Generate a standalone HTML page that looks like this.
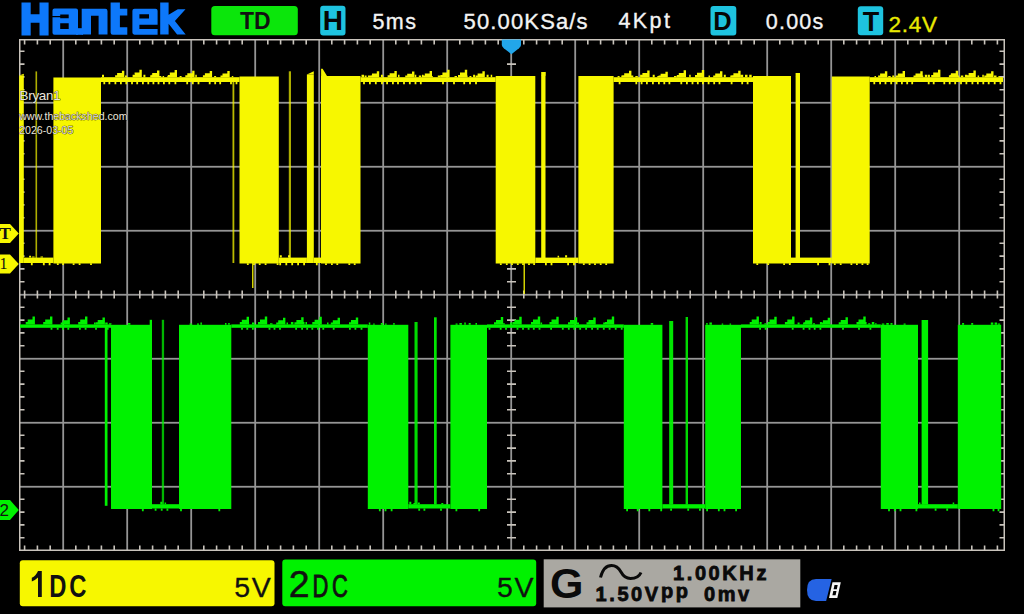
<!DOCTYPE html>
<html><head><meta charset="utf-8"><style>
html,body{margin:0;padding:0;background:#000;}
body{width:1024px;height:614px;overflow:hidden;position:relative;}
svg{position:absolute;left:0;top:0;display:block;}
</style></head><body>
<svg width="1024" height="614" viewBox="0 0 1024 614">
<rect width="1024" height="614" fill="#000"/>
<rect x="62.30" y="40" width="1.8" height="510" fill="#959595"/><rect x="126.30" y="40" width="1.8" height="510" fill="#959595"/><rect x="190.30" y="40" width="1.8" height="510" fill="#959595"/><rect x="254.30" y="40" width="1.8" height="510" fill="#959595"/><rect x="318.30" y="40" width="1.8" height="510" fill="#959595"/><rect x="382.30" y="40" width="1.8" height="510" fill="#959595"/><rect x="446.30" y="40" width="1.8" height="510" fill="#959595"/><rect x="510.30" y="40" width="1.8" height="510" fill="#959595"/><rect x="574.30" y="40" width="1.8" height="510" fill="#959595"/><rect x="638.30" y="40" width="1.8" height="510" fill="#959595"/><rect x="702.30" y="40" width="1.8" height="510" fill="#959595"/><rect x="766.30" y="40" width="1.8" height="510" fill="#959595"/><rect x="830.30" y="40" width="1.8" height="510" fill="#959595"/><rect x="894.30" y="40" width="1.8" height="510" fill="#959595"/><rect x="958.30" y="40" width="1.8" height="510" fill="#959595"/><rect x="20" y="101.85" width="984" height="1.8" fill="#959595"/><rect x="20" y="165.85" width="984" height="1.8" fill="#959595"/><rect x="20" y="229.85" width="984" height="1.8" fill="#959595"/><rect x="20" y="293.85" width="984" height="1.8" fill="#959595"/><rect x="20" y="357.85" width="984" height="1.8" fill="#959595"/><rect x="20" y="421.85" width="984" height="1.8" fill="#959595"/><rect x="20" y="485.85" width="984" height="1.8" fill="#959595"/><rect x="19.75" y="39.75" width="984.5" height="510.5" fill="none" stroke="#c9c4bc" stroke-width="1.5"/><path d="M24.6 40v4.5M24.6 550v-4.5M24.6 290.5v8M37.4 40v4.5M37.4 550v-4.5M37.4 290.5v8M50.2 40v4.5M50.2 550v-4.5M50.2 290.5v8M75.8 40v4.5M75.8 550v-4.5M75.8 290.5v8M88.6 40v4.5M88.6 550v-4.5M88.6 290.5v8M101.4 40v4.5M101.4 550v-4.5M101.4 290.5v8M114.2 40v4.5M114.2 550v-4.5M114.2 290.5v8M139.8 40v4.5M139.8 550v-4.5M139.8 290.5v8M152.6 40v4.5M152.6 550v-4.5M152.6 290.5v8M165.4 40v4.5M165.4 550v-4.5M165.4 290.5v8M178.2 40v4.5M178.2 550v-4.5M178.2 290.5v8M203.8 40v4.5M203.8 550v-4.5M203.8 290.5v8M216.6 40v4.5M216.6 550v-4.5M216.6 290.5v8M229.4 40v4.5M229.4 550v-4.5M229.4 290.5v8M242.2 40v4.5M242.2 550v-4.5M242.2 290.5v8M267.8 40v4.5M267.8 550v-4.5M267.8 290.5v8M280.6 40v4.5M280.6 550v-4.5M280.6 290.5v8M293.4 40v4.5M293.4 550v-4.5M293.4 290.5v8M306.2 40v4.5M306.2 550v-4.5M306.2 290.5v8M331.8 40v4.5M331.8 550v-4.5M331.8 290.5v8M344.6 40v4.5M344.6 550v-4.5M344.6 290.5v8M357.4 40v4.5M357.4 550v-4.5M357.4 290.5v8M370.2 40v4.5M370.2 550v-4.5M370.2 290.5v8M395.8 40v4.5M395.8 550v-4.5M395.8 290.5v8M408.6 40v4.5M408.6 550v-4.5M408.6 290.5v8M421.4 40v4.5M421.4 550v-4.5M421.4 290.5v8M434.2 40v4.5M434.2 550v-4.5M434.2 290.5v8M459.8 40v4.5M459.8 550v-4.5M459.8 290.5v8M472.6 40v4.5M472.6 550v-4.5M472.6 290.5v8M485.4 40v4.5M485.4 550v-4.5M485.4 290.5v8M498.2 40v4.5M498.2 550v-4.5M498.2 290.5v8M523.8 40v4.5M523.8 550v-4.5M523.8 290.5v8M536.6 40v4.5M536.6 550v-4.5M536.6 290.5v8M549.4 40v4.5M549.4 550v-4.5M549.4 290.5v8M562.2 40v4.5M562.2 550v-4.5M562.2 290.5v8M587.8 40v4.5M587.8 550v-4.5M587.8 290.5v8M600.6 40v4.5M600.6 550v-4.5M600.6 290.5v8M613.4 40v4.5M613.4 550v-4.5M613.4 290.5v8M626.2 40v4.5M626.2 550v-4.5M626.2 290.5v8M651.8 40v4.5M651.8 550v-4.5M651.8 290.5v8M664.6 40v4.5M664.6 550v-4.5M664.6 290.5v8M677.4 40v4.5M677.4 550v-4.5M677.4 290.5v8M690.2 40v4.5M690.2 550v-4.5M690.2 290.5v8M715.8 40v4.5M715.8 550v-4.5M715.8 290.5v8M728.6 40v4.5M728.6 550v-4.5M728.6 290.5v8M741.4 40v4.5M741.4 550v-4.5M741.4 290.5v8M754.2 40v4.5M754.2 550v-4.5M754.2 290.5v8M779.8 40v4.5M779.8 550v-4.5M779.8 290.5v8M792.6 40v4.5M792.6 550v-4.5M792.6 290.5v8M805.4 40v4.5M805.4 550v-4.5M805.4 290.5v8M818.2 40v4.5M818.2 550v-4.5M818.2 290.5v8M843.8 40v4.5M843.8 550v-4.5M843.8 290.5v8M856.6 40v4.5M856.6 550v-4.5M856.6 290.5v8M869.4 40v4.5M869.4 550v-4.5M869.4 290.5v8M882.2 40v4.5M882.2 550v-4.5M882.2 290.5v8M907.8 40v4.5M907.8 550v-4.5M907.8 290.5v8M920.6 40v4.5M920.6 550v-4.5M920.6 290.5v8M933.4 40v4.5M933.4 550v-4.5M933.4 290.5v8M946.2 40v4.5M946.2 550v-4.5M946.2 290.5v8M971.8 40v4.5M971.8 550v-4.5M971.8 290.5v8M984.6 40v4.5M984.6 550v-4.5M984.6 290.5v8M997.4 40v4.5M997.4 550v-4.5M997.4 290.5v8M20 51.3h4.5M1004 51.3h-4.5M20 64.1h4.5M1004 64.1h-4.5M507 64.1h9M20 76.9h4.5M1004 76.9h-4.5M507 76.9h9M20 89.7h4.5M1004 89.7h-4.5M507 89.7h9M20 115.3h4.5M1004 115.3h-4.5M507 115.3h9M20 128.1h4.5M1004 128.1h-4.5M507 128.1h9M20 140.9h4.5M1004 140.9h-4.5M507 140.9h9M20 153.7h4.5M1004 153.7h-4.5M507 153.7h9M20 179.3h4.5M1004 179.3h-4.5M507 179.3h9M20 192.1h4.5M1004 192.1h-4.5M507 192.1h9M20 204.9h4.5M1004 204.9h-4.5M507 204.9h9M20 217.7h4.5M1004 217.7h-4.5M507 217.7h9M20 243.3h4.5M1004 243.3h-4.5M507 243.3h9M20 256.1h4.5M1004 256.1h-4.5M507 256.1h9M20 268.9h4.5M1004 268.9h-4.5M507 268.9h9M20 281.7h4.5M1004 281.7h-4.5M507 281.7h9M20 307.3h4.5M1004 307.3h-4.5M507 307.3h9M20 320.1h4.5M1004 320.1h-4.5M507 320.1h9M20 332.9h4.5M1004 332.9h-4.5M507 332.9h9M20 345.7h4.5M1004 345.7h-4.5M507 345.7h9M20 371.3h4.5M1004 371.3h-4.5M507 371.3h9M20 384.1h4.5M1004 384.1h-4.5M507 384.1h9M20 396.9h4.5M1004 396.9h-4.5M507 396.9h9M20 409.7h4.5M1004 409.7h-4.5M507 409.7h9M20 435.3h4.5M1004 435.3h-4.5M507 435.3h9M20 448.1h4.5M1004 448.1h-4.5M507 448.1h9M20 460.9h4.5M1004 460.9h-4.5M507 460.9h9M20 473.7h4.5M1004 473.7h-4.5M507 473.7h9M20 499.3h4.5M1004 499.3h-4.5M507 499.3h9M20 512.1h4.5M1004 512.1h-4.5M507 512.1h9M20 524.9h4.5M1004 524.9h-4.5M507 524.9h9M20 537.7h4.5M1004 537.7h-4.5M507 537.7h9" stroke="#c9c4bc" stroke-width="1.6" fill="none"/>
<rect x="101.00" y="77.20" width="138.50" height="4.80" fill="#F7F700"/><rect x="360.50" y="77.20" width="135.20" height="4.80" fill="#F7F700"/><rect x="613.60" y="77.20" width="139.40" height="4.80" fill="#F7F700"/><rect x="869.70" y="77.20" width="133.30" height="4.80" fill="#F7F700"/><rect x="23.80" y="257.60" width="29.60" height="5.40" fill="#F7F700"/><rect x="278.80" y="257.60" width="28.10" height="5.40" fill="#F7F700"/><rect x="313.80" y="257.60" width="7.20" height="5.40" fill="#F7F700"/><rect x="535.30" y="257.60" width="43.10" height="5.40" fill="#F7F700"/><rect x="791.00" y="257.60" width="40.80" height="5.40" fill="#F7F700"/><rect x="19.20" y="75.60" width="4.60" height="187.40" fill="#F7F700"/><rect x="53.40" y="77.50" width="47.60" height="186.00" fill="#F7F700"/><rect x="239.50" y="76.50" width="39.30" height="187.00" fill="#F7F700"/><rect x="306.90" y="74.50" width="6.90" height="188.50" fill="#F7F700"/><rect x="321.00" y="76.00" width="39.50" height="187.50" fill="#F7F700"/><rect x="495.70" y="76.00" width="39.60" height="187.50" fill="#F7F700"/><rect x="578.40" y="76.00" width="35.20" height="187.50" fill="#F7F700"/><rect x="753.00" y="76.00" width="38.00" height="187.50" fill="#F7F700"/><rect x="831.80" y="76.50" width="37.90" height="187.00" fill="#F7F700"/><rect x="35.50" y="71.40" width="1.60" height="190.60" fill="#F7F700" opacity="0.7"/><rect x="232.50" y="80.00" width="1.80" height="183.00" fill="#F7F700" opacity="0.75"/><rect x="288.80" y="71.30" width="2.20" height="190.70" fill="#F7F700" opacity="0.7"/><rect x="541.20" y="72.00" width="4.30" height="190.00" fill="#F7F700"/><rect x="795.60" y="73.00" width="4.40" height="189.00" fill="#F7F700"/><rect x="252.00" y="262.00" width="1.50" height="26.00" fill="#F7F700" opacity="0.85"/><rect x="523.50" y="262.00" width="1.50" height="32.00" fill="#F7F700" opacity="0.85"/><path d="M102.0 77.2v-2.4h2v2.4zM116.6 77.2v-1.2h1.5v1.2zM125.0 77.2v-1.8h2v1.8zM132.6 77.2v-2.4h1.5v2.4zM135.7 77.2v-1.2h2.5v1.2zM138.8 77.2v-1.8h2.5v1.8zM143.4 77.2v-2.4h2v2.4zM151.4 77.2v-2.4h1.5v2.4zM155.8 77.2v-1.2h2.5v1.2zM159.3 77.2v-1.2h2v1.2zM162.6 77.2v-1.2h1.5v1.2zM167.3 77.2v-1.2h1.5v1.2zM175.0 77.2v-2.4h1.5v2.4zM179.6 77.2v-1.2h2v1.2zM187.7 77.2v-1.2h2.5v1.2zM190.9 77.2v-1.8h1.5v1.8zM195.3 77.2v-2.4h1.5v2.4zM204.1 77.2v-1.8h2v1.8zM209.1 77.2v-2.4h2v2.4zM214.1 77.2v-1.2h2v1.2zM223.2 77.2v-1.2h1.5v1.2zM227.1 77.2v-2.4h2v2.4zM231.8 77.2v-1.2h1.5v1.2zM103.4 82.0v2.2h1.8v-2.2zM108.5 82.0v2.2h1.8v-2.2zM114.5 82.0v2.2h1.8v-2.2zM120.0 82.0v2.2h1.8v-2.2zM125.4 82.0v2.2h1.8v-2.2zM131.1 82.0v2.2h1.8v-2.2zM136.3 82.0v2.2h1.8v-2.2zM142.0 82.0v2.2h1.8v-2.2zM147.4 82.0v2.2h1.8v-2.2zM152.5 82.0v2.2h1.8v-2.2zM157.6 82.0v2.2h1.8v-2.2zM163.0 82.0v2.2h1.8v-2.2zM168.4 82.0v2.2h1.8v-2.2zM174.5 82.0v2.2h1.8v-2.2zM186.3 82.0v2.2h1.8v-2.2zM191.9 82.0v2.2h1.8v-2.2zM197.6 82.0v2.2h1.8v-2.2zM208.8 82.0v2.2h1.8v-2.2zM214.3 82.0v2.2h1.8v-2.2zM219.3 82.0v2.2h1.8v-2.2zM230.1 82.0v2.2h1.8v-2.2zM235.6 82.0v2.2h1.8v-2.2zM115.1 77.2V75.2H117.1V73.1H121.9V70.7H124.3V77.2zM132.6 77.2V75.0H134.6V72.6H139.4V69.8H141.8V77.2zM150.2 77.2V75.2H152.2V73.1H157.0V70.5H159.4V77.2zM167.8 77.2V75.0H169.8V72.6H174.6V69.9H177.0V77.2zM185.3 77.2V75.3H187.3V73.2H192.2V70.8H194.5V77.2zM202.9 77.2V75.3H204.9V73.3H209.7V71.0H212.1V77.2zM220.5 77.2V75.4H222.5V73.4H227.3V71.1H229.7V77.2zM361.5 77.2v-2.4h2.5v2.4zM364.6 77.2v-1.8h2v1.8zM367.9 77.2v-1.8h2.5v1.8zM371.7 77.2v-2.4h2.5v2.4zM380.9 77.2v-2.4h2v2.4zM394.3 77.2v-2.4h2.5v2.4zM398.0 77.2v-2.4h1.5v2.4zM410.6 77.2v-2.4h2.5v2.4zM414.8 77.2v-2.4h1.5v2.4zM418.8 77.2v-1.8h2.5v1.8zM422.0 77.2v-2.4h1.5v2.4zM430.8 77.2v-1.2h2v1.2zM437.8 77.2v-1.8h2.5v1.8zM442.7 77.2v-1.2h2v1.2zM446.5 77.2v-2.4h2v2.4zM454.5 77.2v-1.2h2.5v1.2zM459.4 77.2v-1.2h2v1.2zM466.1 77.2v-1.8h1.5v1.8zM469.4 77.2v-1.2h2v1.2zM473.1 77.2v-2.4h2v2.4zM481.8 77.2v-1.2h2v1.2zM486.6 77.2v-2.4h2v2.4zM490.7 77.2v-2.4h1.5v2.4zM363.1 82.0v2.2h1.8v-2.2zM369.0 82.0v2.2h1.8v-2.2zM374.9 82.0v2.2h1.8v-2.2zM381.1 82.0v2.2h1.8v-2.2zM386.2 82.0v2.2h1.8v-2.2zM392.0 82.0v2.2h1.8v-2.2zM397.1 82.0v2.2h1.8v-2.2zM403.1 82.0v2.2h1.8v-2.2zM408.9 82.0v2.2h1.8v-2.2zM414.6 82.0v2.2h1.8v-2.2zM419.9 82.0v2.2h1.8v-2.2zM442.1 82.0v2.2h1.8v-2.2zM453.1 82.0v2.2h1.8v-2.2zM463.3 82.0v2.2h1.8v-2.2zM469.1 82.0v2.2h1.8v-2.2zM475.1 82.0v2.2h1.8v-2.2zM370.0 77.2V75.4H372.0V73.5H376.8V71.2H379.2V77.2zM387.6 77.2V75.3H389.6V73.3H394.4V70.9H396.8V77.2zM405.2 77.2V75.5H407.2V73.7H412.0V71.5H414.4V77.2zM422.8 77.2V75.4H424.8V73.4H429.6V71.1H432.0V77.2zM440.4 77.2V75.0H442.4V72.6H447.2V69.7H449.6V77.2zM458.0 77.2V75.0H460.0V72.6H464.8V69.8H467.2V77.2zM475.6 77.2V75.4H477.6V73.5H482.4V71.2H484.8V77.2zM617.6 77.2v-1.2h2v1.2zM621.3 77.2v-1.8h2v1.8zM626.2 77.2v-1.2h2v1.2zM630.8 77.2v-1.8h2.5v1.8zM635.3 77.2v-1.2h2.5v1.2zM640.1 77.2v-2.4h2.5v2.4zM652.7 77.2v-2.4h2v2.4zM657.3 77.2v-1.2h2.5v1.2zM674.0 77.2v-1.2h2.5v1.2zM678.1 77.2v-1.2h2v1.2zM682.1 77.2v-2.4h2v2.4zM689.2 77.2v-2.4h1.5v2.4zM696.3 77.2v-1.8h2v1.8zM699.9 77.2v-1.2h2v1.2zM708.5 77.2v-1.8h1.5v1.8zM716.8 77.2v-1.2h1.5v1.2zM720.2 77.2v-2.4h2v2.4zM723.8 77.2v-2.4h2v2.4zM730.3 77.2v-1.8h2.5v1.8zM733.7 77.2v-1.8h1.5v1.8zM737.4 77.2v-2.4h2.5v2.4zM740.7 77.2v-2.4h2.5v2.4zM745.0 77.2v-2.4h2.5v2.4zM749.2 77.2v-2.4h2.5v2.4zM618.7 82.0v2.2h1.8v-2.2zM635.4 82.0v2.2h1.8v-2.2zM640.7 82.0v2.2h1.8v-2.2zM646.0 82.0v2.2h1.8v-2.2zM652.0 82.0v2.2h1.8v-2.2zM658.0 82.0v2.2h1.8v-2.2zM663.4 82.0v2.2h1.8v-2.2zM668.5 82.0v2.2h1.8v-2.2zM680.4 82.0v2.2h1.8v-2.2zM686.0 82.0v2.2h1.8v-2.2zM691.6 82.0v2.2h1.8v-2.2zM696.9 82.0v2.2h1.8v-2.2zM702.0 82.0v2.2h1.8v-2.2zM707.7 82.0v2.2h1.8v-2.2zM713.3 82.0v2.2h1.8v-2.2zM718.6 82.0v2.2h1.8v-2.2zM730.7 82.0v2.2h1.8v-2.2zM741.3 82.0v2.2h1.8v-2.2zM746.7 82.0v2.2h1.8v-2.2zM622.2 77.2V75.3H624.2V73.3H629.0V70.8H631.4V77.2zM640.4 77.2V75.2H642.4V73.0H647.2V70.5H649.6V77.2zM658.6 77.2V75.5H660.6V73.8H665.4V71.7H667.8V77.2zM676.8 77.2V75.1H678.8V72.9H683.6V70.3H686.0V77.2zM695.0 77.2V75.0H697.0V72.7H701.8V70.0H704.2V77.2zM713.2 77.2V75.4H715.2V73.6H720.0V71.3H722.4V77.2zM731.4 77.2V75.3H733.4V73.2H738.2V70.8H740.6V77.2zM874.5 77.2v-1.2h1.5v1.2zM878.5 77.2v-1.2h2.5v1.2zM888.2 77.2v-1.2h2.5v1.2zM892.3 77.2v-1.8h2v1.8zM921.8 77.2v-1.8h1.5v1.8zM924.8 77.2v-2.4h2.5v2.4zM927.9 77.2v-2.4h2v2.4zM935.7 77.2v-1.8h2.5v1.8zM950.1 77.2v-2.4h1.5v2.4zM954.5 77.2v-1.8h2.5v1.8zM957.6 77.2v-1.8h1.5v1.8zM960.8 77.2v-1.8h2.5v1.8zM964.9 77.2v-2.4h2.5v2.4zM969.6 77.2v-1.8h2.5v1.8zM972.8 77.2v-1.2h2v1.2zM977.6 77.2v-1.8h1.5v1.8zM982.3 77.2v-2.4h1.5v2.4zM986.2 77.2v-1.8h2.5v1.8zM990.0 77.2v-2.4h2v2.4zM994.0 77.2v-1.8h2.5v1.8zM998.4 77.2v-1.2h1.5v1.2zM873.4 82.0v2.2h1.8v-2.2zM879.2 82.0v2.2h1.8v-2.2zM884.6 82.0v2.2h1.8v-2.2zM890.3 82.0v2.2h1.8v-2.2zM895.7 82.0v2.2h1.8v-2.2zM901.0 82.0v2.2h1.8v-2.2zM906.3 82.0v2.2h1.8v-2.2zM911.3 82.0v2.2h1.8v-2.2zM927.8 82.0v2.2h1.8v-2.2zM932.8 82.0v2.2h1.8v-2.2zM943.4 82.0v2.2h1.8v-2.2zM948.8 82.0v2.2h1.8v-2.2zM954.3 82.0v2.2h1.8v-2.2zM960.1 82.0v2.2h1.8v-2.2zM965.5 82.0v2.2h1.8v-2.2zM971.5 82.0v2.2h1.8v-2.2zM976.9 82.0v2.2h1.8v-2.2zM982.4 82.0v2.2h1.8v-2.2zM987.8 82.0v2.2h1.8v-2.2zM993.8 82.0v2.2h1.8v-2.2zM999.6 82.0v2.2h1.8v-2.2zM878.1 77.2V75.4H880.1V73.6H884.9V71.3H887.3V77.2zM895.8 77.2V75.4H897.8V73.4H902.6V71.1H905.0V77.2zM913.5 77.2V75.4H915.5V73.5H920.3V71.2H922.7V77.2zM931.2 77.2V75.0H933.2V72.6H938.0V69.8H940.4V77.2zM948.9 77.2V75.2H950.9V73.2H955.7V70.7H958.1V77.2zM966.6 77.2V75.2H968.6V73.0H973.4V70.4H975.8V77.2zM984.3 77.2V75.4H986.3V73.5H991.1V71.3H993.5V77.2z" fill="#F7F700"/><path d="M29.1 257.6v-1.8h2v1.8zM32.1 257.6v-1.2h2.5v1.2zM40.5 257.6v-1.2h2.5v1.2zM30.9 263.0v2.2h1.8v-2.2zM42.9 263.0v2.2h1.8v-2.2zM48.7 263.0v2.2h1.8v-2.2zM279.8 257.6v-2.4h2v2.4zM288.0 257.6v-2.4h2v2.4zM279.3 263.0v2.2h1.8v-2.2zM285.4 263.0v2.2h1.8v-2.2zM291.3 263.0v2.2h1.8v-2.2zM297.2 263.0v2.2h1.8v-2.2zM303.2 263.0v2.2h1.8v-2.2zM315.9 263.0v2.2h1.8v-2.2zM557.6 257.6v-1.8h1.5v1.8zM565.1 257.6v-2.4h2v2.4zM545.0 263.0v2.2h1.8v-2.2zM550.6 263.0v2.2h1.8v-2.2zM567.2 263.0v2.2h1.8v-2.2zM573.1 263.0v2.2h1.8v-2.2zM796.8 257.6v-2.4h2.5v2.4zM817.2 263.0v2.2h1.8v-2.2zM828.6 263.0v2.2h1.8v-2.2z" fill="#F7F700"/><path d="M56.9 263.3v1.8h1.8v-1.8zM62.2 263.3v1.8h1.8v-1.8zM72.7 263.3v1.8h1.8v-1.8zM78.7 263.3v1.8h1.8v-1.8zM90.1 263.3v1.8h1.8v-1.8zM246.9 263.3v1.8h1.8v-1.8zM253.1 263.3v1.8h1.8v-1.8zM258.8 263.3v1.8h1.8v-1.8zM264.7 263.3v1.8h1.8v-1.8zM276.7 263.3v1.8h1.8v-1.8zM325.1 263.3v1.8h1.8v-1.8zM331.0 263.3v1.8h1.8v-1.8zM336.4 263.3v1.8h1.8v-1.8zM348.4 263.3v1.8h1.8v-1.8zM353.8 263.3v1.8h1.8v-1.8zM499.9 263.3v1.8h1.8v-1.8zM505.9 263.3v1.8h1.8v-1.8zM511.1 263.3v1.8h1.8v-1.8zM516.9 263.3v1.8h1.8v-1.8zM522.1 263.3v1.8h1.8v-1.8zM528.1 263.3v1.8h1.8v-1.8zM533.2 263.3v1.8h1.8v-1.8zM582.9 263.3v1.8h1.8v-1.8zM588.7 263.3v1.8h1.8v-1.8zM594.1 263.3v1.8h1.8v-1.8zM599.8 263.3v1.8h1.8v-1.8zM605.3 263.3v1.8h1.8v-1.8zM756.4 263.3v1.8h1.8v-1.8zM767.3 263.3v1.8h1.8v-1.8zM783.2 263.3v1.8h1.8v-1.8zM788.9 263.3v1.8h1.8v-1.8zM833.9 263.3v1.8h1.8v-1.8zM839.8 263.3v1.8h1.8v-1.8zM850.5 263.3v1.8h1.8v-1.8zM856.0 263.3v1.8h1.8v-1.8zM861.5 263.3v1.8h1.8v-1.8zM866.7 263.3v1.8h1.8v-1.8z" fill="#F7F700"/><path d="M541.2 76L545.5 71.7v4z M795.6 77L800 73v4z M19.2 75.6L23.8 73.8v2z M306.9 74.5L313.8 71.3v3.2z M321.1 76L321.1 68.8h1.5L327 76z" fill="#F7F700"/><rect x="20.00" y="324.40" width="91.00" height="3.40" fill="#00F200"/><rect x="231.30" y="324.40" width="136.50" height="3.40" fill="#00F200"/><rect x="487.00" y="324.40" width="136.80" height="3.40" fill="#00F200"/><rect x="741.00" y="324.40" width="139.80" height="3.40" fill="#00F200"/><rect x="152.00" y="504.20" width="27.00" height="4.30" fill="#00F200"/><rect x="408.30" y="504.20" width="42.10" height="4.30" fill="#00F200"/><rect x="662.40" y="504.20" width="42.80" height="4.30" fill="#00F200"/><rect x="918.00" y="504.20" width="39.80" height="4.30" fill="#00F200"/><rect x="111.00" y="324.80" width="41.00" height="184.20" fill="#00F200"/><rect x="179.00" y="324.80" width="52.30" height="184.20" fill="#00F200"/><rect x="367.80" y="324.80" width="40.50" height="184.20" fill="#00F200"/><rect x="450.40" y="324.80" width="36.60" height="184.20" fill="#00F200"/><rect x="623.80" y="324.80" width="38.60" height="184.20" fill="#00F200"/><rect x="705.20" y="324.80" width="35.80" height="184.20" fill="#00F200"/><rect x="880.80" y="324.80" width="37.20" height="184.20" fill="#00F200"/><rect x="957.80" y="324.80" width="43.40" height="184.20" fill="#00F200"/><rect x="104.80" y="326.00" width="2.70" height="179.80" fill="#00F200"/><rect x="149.70" y="319.80" width="2.30" height="6.20" fill="#00F200"/><rect x="161.80" y="319.80" width="2.30" height="184.70" fill="#00F200" opacity="0.75"/><rect x="414.50" y="322.00" width="3.10" height="182.50" fill="#00F200" opacity="0.9"/><rect x="434.00" y="317.30" width="2.70" height="187.20" fill="#00F200" opacity="0.95"/><rect x="669.20" y="321.00" width="4.00" height="183.50" fill="#00F200" opacity="0.95"/><rect x="685.60" y="317.00" width="2.40" height="187.50" fill="#00F200" opacity="0.9"/><rect x="921.60" y="320.00" width="6.50" height="184.50" fill="#00F200"/><path d="M94.0 324.4v-1.8h1.5v1.8zM105.2 324.4v-1.8h2.5v1.8zM109.0 324.4v-1.2h2.5v1.2zM50.6 327.8v1.9h1.8v-1.9zM56.8 327.8v1.9h1.8v-1.9zM62.0 327.8v1.9h1.8v-1.9zM67.4 327.8v1.9h1.8v-1.9zM79.0 327.8v1.9h1.8v-1.9zM84.7 327.8v1.9h1.8v-1.9zM95.1 327.8v1.9h1.8v-1.9zM106.8 327.8v1.9h1.8v-1.9zM25.7 324.4V322.0H27.7V319.5H32.5V316.5H34.9V324.4zM43.2 324.4V322.0H45.2V319.5H50.0V316.6H52.4V324.4zM60.7 324.4V322.4H62.7V320.2H67.5V317.6H69.9V324.4zM78.2 324.4V322.1H80.2V319.6H85.0V316.6H87.4V324.4zM95.7 324.4V322.3H97.7V320.0H102.5V317.4H104.9V324.4zM240.6 324.4v-2.4h1.5v2.4zM247.1 324.4v-2.4h2v2.4zM252.0 324.4v-1.8h2.5v1.8zM265.5 324.4v-1.8h1.5v1.8zM270.0 324.4v-1.2h2.5v1.2zM286.5 324.4v-1.8h1.5v1.8zM290.9 324.4v-2.4h2.5v2.4zM302.0 324.4v-2.4h2.5v2.4zM305.5 324.4v-2.4h1.5v2.4zM312.3 324.4v-2.4h2.5v2.4zM327.0 324.4v-1.8h1.5v1.8zM241.1 327.8v1.9h1.8v-1.9zM246.4 327.8v1.9h1.8v-1.9zM252.0 327.8v1.9h1.8v-1.9zM268.6 327.8v1.9h1.8v-1.9zM273.6 327.8v1.9h1.8v-1.9zM279.1 327.8v1.9h1.8v-1.9zM295.2 327.8v1.9h1.8v-1.9zM301.2 327.8v1.9h1.8v-1.9zM306.3 327.8v1.9h1.8v-1.9zM311.4 327.8v1.9h1.8v-1.9zM317.1 327.8v1.9h1.8v-1.9zM322.4 327.8v1.9h1.8v-1.9zM332.8 327.8v1.9h1.8v-1.9zM349.0 327.8v1.9h1.8v-1.9zM354.5 327.8v1.9h1.8v-1.9zM360.6 327.8v1.9h1.8v-1.9zM239.8 324.4V322.1H241.8V319.7H246.6V316.8H249.0V324.4zM258.0 324.4V322.0H260.0V319.5H264.8V316.4H267.2V324.4zM276.2 324.4V322.4H278.2V320.2H283.0V317.7H285.4V324.4zM294.4 324.4V322.2H296.4V319.9H301.2V317.2H303.6V324.4zM312.6 324.4V322.1H314.6V319.7H319.4V316.8H321.8V324.4zM330.8 324.4V322.4H332.8V320.3H337.6V317.8H340.0V324.4zM349.0 324.4V322.3H351.0V320.1H355.8V317.5H358.2V324.4zM498.0 324.4v-2.4h2.5v2.4zM502.3 324.4v-1.2h2.5v1.2zM510.1 324.4v-1.8h2v1.8zM518.5 324.4v-2.4h2.5v2.4zM540.6 324.4v-1.8h1.5v1.8zM550.7 324.4v-1.2h2.5v1.2zM573.2 324.4v-1.2h2.5v1.2zM576.5 324.4v-1.8h2.5v1.8zM603.2 324.4v-1.8h2v1.8zM488.6 327.8v1.9h1.8v-1.9zM499.8 327.8v1.9h1.8v-1.9zM505.1 327.8v1.9h1.8v-1.9zM516.6 327.8v1.9h1.8v-1.9zM522.1 327.8v1.9h1.8v-1.9zM527.7 327.8v1.9h1.8v-1.9zM532.9 327.8v1.9h1.8v-1.9zM538.6 327.8v1.9h1.8v-1.9zM550.2 327.8v1.9h1.8v-1.9zM561.9 327.8v1.9h1.8v-1.9zM567.9 327.8v1.9h1.8v-1.9zM573.4 327.8v1.9h1.8v-1.9zM579.3 327.8v1.9h1.8v-1.9zM585.2 327.8v1.9h1.8v-1.9zM591.2 327.8v1.9h1.8v-1.9zM596.8 327.8v1.9h1.8v-1.9zM602.9 327.8v1.9h1.8v-1.9zM608.7 327.8v1.9h1.8v-1.9zM614.8 327.8v1.9h1.8v-1.9zM620.8 327.8v1.9h1.8v-1.9zM494.0 324.4V322.2H496.0V319.9H500.8V317.1H503.2V324.4zM512.5 324.4V322.1H514.5V319.7H519.3V316.8H521.7V324.4zM531.0 324.4V322.0H533.0V319.5H537.8V316.5H540.2V324.4zM549.5 324.4V322.1H551.5V319.6H556.3V316.7H558.7V324.4zM568.0 324.4V322.2H570.0V319.9H574.8V317.2H577.2V324.4zM586.5 324.4V322.3H588.5V320.1H593.3V317.5H595.7V324.4zM605.0 324.4V322.1H607.0V319.6H611.8V316.6H614.2V324.4zM754.9 324.4v-1.8h2v1.8zM759.6 324.4v-2.4h2v2.4zM764.4 324.4v-1.2h2v1.2zM784.9 324.4v-2.4h1.5v2.4zM797.6 324.4v-1.8h2v1.8zM804.4 324.4v-2.4h2v2.4zM813.0 324.4v-1.2h2v1.2zM819.9 324.4v-2.4h2v2.4zM840.1 324.4v-1.2h1.5v1.2zM864.1 324.4v-2.4h2.5v2.4zM868.2 324.4v-1.2h2v1.2zM871.8 324.4v-2.4h2.5v2.4zM875.1 324.4v-1.2h1.5v1.2zM759.2 327.8v1.9h1.8v-1.9zM764.7 327.8v1.9h1.8v-1.9zM791.8 327.8v1.9h1.8v-1.9zM802.7 327.8v1.9h1.8v-1.9zM808.6 327.8v1.9h1.8v-1.9zM813.8 327.8v1.9h1.8v-1.9zM819.5 327.8v1.9h1.8v-1.9zM842.1 327.8v1.9h1.8v-1.9zM858.1 327.8v1.9h1.8v-1.9zM869.5 327.8v1.9h1.8v-1.9zM749.7 324.4V322.0H751.7V319.5H756.5V316.5H758.9V324.4zM767.5 324.4V322.1H769.5V319.6H774.3V316.7H776.7V324.4zM785.3 324.4V322.1H787.3V319.6H792.1V316.6H794.5V324.4zM803.1 324.4V322.4H805.1V320.2H809.9V317.6H812.3V324.4zM820.9 324.4V322.4H822.9V320.3H827.7V317.8H830.1V324.4zM838.7 324.4V322.3H840.7V320.0H845.5V317.2H847.9V324.4zM856.5 324.4V322.1H858.5V319.6H863.3V316.6H865.7V324.4z" fill="#00F200"/><path d="M160.3 504.2v-2.4h2v2.4zM164.6 504.2v-1.8h1.5v1.8zM154.7 508.5v2.2h1.8v-2.2zM160.8 508.5v2.2h1.8v-2.2zM166.5 508.5v2.2h1.8v-2.2zM409.3 504.2v-2.4h2v2.4zM413.4 504.2v-1.2h2v1.2zM417.8 504.2v-1.8h2v1.8zM441.3 504.2v-1.2h2v1.2zM418.3 508.5v2.2h1.8v-2.2zM423.5 508.5v2.2h1.8v-2.2zM440.1 508.5v2.2h1.8v-2.2zM670.2 508.5v2.2h1.8v-2.2zM687.3 508.5v2.2h1.8v-2.2zM699.0 508.5v2.2h1.8v-2.2zM919.0 504.2v-1.8h1.5v1.8zM922.9 504.2v-2.4h1.5v2.4zM952.7 504.2v-1.8h1.5v1.8zM934.7 508.5v2.2h1.8v-2.2zM946.3 508.5v2.2h1.8v-2.2z" fill="#00F200"/><path d="M127.9 324.8v-1.8h2.5v1.8zM141.9 509v2.2h1.8v-2.2zM189.6 324.8v-1.2h2.5v1.2zM197.0 324.8v-1.2h2v1.2zM200.4 324.8v-2.4h1.5v2.4zM225.0 324.8v-1.8h1.5v1.8zM228.2 324.8v-1.8h1.5v1.8zM180.1 509v2.2h1.8v-2.2zM218.4 509v2.2h1.8v-2.2zM368.8 324.8v-2.4h1.5v2.4zM373.2 324.8v-1.2h1.5v1.2zM380.8 324.8v-1.8h2.5v1.8zM385.1 324.8v-1.2h1.5v1.2zM393.2 324.8v-1.8h1.5v1.8zM378.9 509v2.2h1.8v-2.2zM384.6 509v2.2h1.8v-2.2zM390.7 509v2.2h1.8v-2.2zM455.6 324.8v-1.2h2v1.2zM459.4 324.8v-1.8h2.5v1.8zM464.3 324.8v-2.4h1.5v2.4zM468.7 324.8v-1.8h2v1.8zM475.5 324.8v-1.8h1.5v1.8zM455.5 509v2.2h1.8v-2.2zM478.3 509v2.2h1.8v-2.2zM650.7 324.8v-1.8h2.5v1.8zM626.2 509v2.2h1.8v-2.2zM636.8 509v2.2h1.8v-2.2zM648.4 509v2.2h1.8v-2.2zM660.3 509v2.2h1.8v-2.2zM706.2 324.8v-1.8h1.5v1.8zM709.4 324.8v-2.4h2.5v2.4zM721.7 324.8v-1.2h1.5v1.2zM729.6 324.8v-1.2h1.5v1.2zM706.2 509v2.2h1.8v-2.2zM717.9 509v2.2h1.8v-2.2zM723.6 509v2.2h1.8v-2.2zM735.2 509v2.2h1.8v-2.2zM881.8 324.8v-1.2h2.5v1.2zM886.3 324.8v-1.8h2.5v1.8zM890.5 324.8v-1.8h2v1.8zM903.6 324.8v-1.2h2v1.2zM888.1 509v2.2h1.8v-2.2zM893.9 509v2.2h1.8v-2.2zM899.6 509v2.2h1.8v-2.2zM915.5 509v2.2h1.8v-2.2zM962.1 324.8v-1.8h2v1.8zM971.2 324.8v-1.8h2v1.8zM990.8 324.8v-2.4h2.5v2.4zM994.6 324.8v-2.4h2.5v2.4zM997.7 324.8v-1.2h2.5v1.2zM992.6 509v2.2h1.8v-2.2zM997.6 509v2.2h1.8v-2.2z" fill="#00F200"/>
<path d="M501.8 39.5h19.2v5.5q0 1.5-2 3.3l-7.6 5.9l-7.6-5.9q-2-1.8-2-3.3z" fill="#22a6ea"/>
<path d="M0 224h10l8.8 9.5l-8.8 9.5h-10z" fill="#F7F700"/><text x="-0.5" y="239.11" font-family="Liberation Serif" font-weight="bold" font-size="17" fill="#111">T</text><path d="M0 254.5h10l8.8 9.5l-8.8 9.5h-10z" fill="#F7F700"/><text x="-0.5" y="269.28" font-family="Liberation Serif" font-weight="normal" font-size="16" fill="#111">1</text><path d="M0 500h10l8.8 10.0l-8.8 10.0h-10z" fill="#00F200"/><text x="-0.5" y="515.61" font-family="Liberation Sans" font-weight="normal" font-size="17" fill="#111">2</text>
<g font-family="Liberation Sans" fill="#ebe6dc" stroke="#000" stroke-width="0.6" paint-order="stroke" >
<text x="19.5" y="99.9" font-size="13.4" letter-spacing="-0.25">Bryan1</text>
<text x="19.2" y="120.3" font-size="10.6">www.thebackshed.com</text>
<text x="19.2" y="134.2" font-size="10.6">2026-03-05</text>
</g>
<g fill="#0d78fa">
<path d="M21.5 2.5h9.2v11.8h8.8v-11.8h9.1v33h-9.1v-12.7h-8.8v12.7h-9.2z"/>
<path d="M54.5 8.5h21.5q2 0 2 2v24.3h-23.5q-2 0-2-2v-22.3q0-2 2-2z M60.2 14.6h8.5v3.7h-8.5z M52.5 15.9h7.7v1.3h-7.7z M60.2 23.3v5.7h8.5v-5.7z" fill-rule="evenodd"/>
<rect x="76" y="28.2" width="7" height="6.6"/>
<path d="M81.7 8.7h23.6q2.2 0 2.2 2.2v23.7h-8.9v-18.9h-7.6v18.9h-9.3z"/>
<path d="M110.6 2.5h9.3v6.2h7.4v6.8h-7.4v11.7h7.4v7.5h-14.5q-2.2 0-2.2-2.2z"/>
<path d="M132.5 8.7h23q2.1 0 2.1 2.1v14h-18.2v4.3h18.2v5.6h-23.1q-2.1 0-2.1-2.1v-21.8q0-2.1 2.1-2.1z M139.4 14.2v4.4h9.6v-4.4z" fill-rule="evenodd"/>
<path d="M160.2 2.5h8.4v12.2l9.2-5.4h7.7l-10.6 11.6l10.8 13.6h-8.6l-8.5-10.8v10.8h-8.4z"/>
</g>

<rect x="211.3" y="5.9" width="86.5" height="29.3" rx="3.5" fill="#0be60b"/>
<text x="240" y="28.9" font-family="Liberation Sans" font-weight="bold" font-size="23" fill="#111">TD</text>
<rect x="320.2" y="5.8" width="25.3" height="29.6" rx="3" fill="#1ec3df"/>
<text x="332.8" y="30.4" text-anchor="middle" font-family="Liberation Sans" font-weight="bold" font-size="28" fill="#050505">H</text>
<g font-family="Liberation Sans" fill="#f4f4f4" stroke="#f4f4f4" stroke-width="0.35">
<text x="372.5" y="28.9" font-size="21.5" letter-spacing="1.4">5ms</text>
<text x="463.5" y="29.3" font-size="22" letter-spacing="1.15">50.00KSa/s</text>
<text x="618.5" y="27.6" font-size="21.5" letter-spacing="2.4">4Kpt</text>
<text x="765.8" y="29.3" font-size="21.5" letter-spacing="1.2">0.00s</text>
<text x="888.6" y="31.8" font-size="22.5" letter-spacing="0.7" fill="#e8e800" stroke="#e8e800">2.4V</text>
</g>
<rect x="710.5" y="5.9" width="25.8" height="29.7" rx="3" fill="#1ec3df"/>
<text x="722.5" y="29.7" text-anchor="middle" font-family="Liberation Sans" font-weight="bold" font-size="25.5" fill="#050505">D</text>
<rect x="857.8" y="6.2" width="25.4" height="29" rx="3" fill="#1ec3df"/>
<text x="871" y="30.8" text-anchor="middle" font-family="Liberation Sans" font-weight="bold" font-size="27" fill="#050505">T</text>


<rect x="19.8" y="560.3" width="254.7" height="46" rx="3" fill="#F7F700"/>
<path d="M38 570.9h3.8v26.2h-3.8v-19.6q-2.6 2.6-6.2 3.9v-3.6q4-1.8 6.2-6.9z" fill="#111"/>
<text transform="translate(49.3 597.1) scale(0.78 1)" font-family="Liberation Sans" font-weight="bold" font-size="30.5" letter-spacing="3.6" fill="#111">DC</text>
<text x="234.3" y="597.2" font-family="Liberation Sans" font-size="28.5" letter-spacing="1.6" fill="#111" stroke="#111" stroke-width="0.3">5V</text>
<rect x="282.3" y="559.6" width="253.9" height="46.7" rx="3" fill="#00F200"/>
<text x="288.8" y="597.1" font-family="Liberation Sans" font-size="37.5" fill="#111" stroke="#111" stroke-width="0.5">2</text>
<text transform="translate(312.6 597.1) scale(0.72 1)" font-family="Liberation Sans" font-size="30.5" letter-spacing="5" fill="#111" stroke="#111" stroke-width="0.9">DC</text>
<text x="497" y="597.2" font-family="Liberation Sans" font-size="28.5" letter-spacing="1.6" fill="#111" stroke="#111" stroke-width="0.3">5V</text>
<rect x="543.7" y="559.3" width="256.6" height="48.1" fill="#aaa8a2"/>
<text x="550" y="598.3" font-family="Liberation Sans" font-weight="bold" font-size="43" fill="#0a0a0a">G</text>
<path d="M600.5 577.5q3-12 11-12q6 0 9.5 6.5t9.5 6.5q8 0 10.5-6" stroke="#0a0a0a" stroke-width="3" fill="none"/>
<g font-family="Liberation Sans" font-weight="bold" font-size="20" letter-spacing="2.6" fill="#0a0a0a" stroke="#0a0a0a" stroke-width="0.8">
<text x="673" y="580.2">1.00KHz</text>
<text x="595.5" y="601.2">1.50V</text>
<text x="661" y="597.8">pp</text>
<text x="704" y="601.2">0mv</text>
</g>
<path d="M816 578.9h15.6l-5.5 22h-10.1q-9 0-9-11q0-11 9-11z" fill="#2563e3"/>
<path d="M832.5 582.2h8.3l-3.5 15.8h-8.3z" fill="#f4f4f4"/>
<path d="M834.5 585h3.2l-0.9 4.2h-3.2zM833.3 591h3.2l-0.9 4.2h-3.2z" fill="#000"/>

</svg>
</body></html>
